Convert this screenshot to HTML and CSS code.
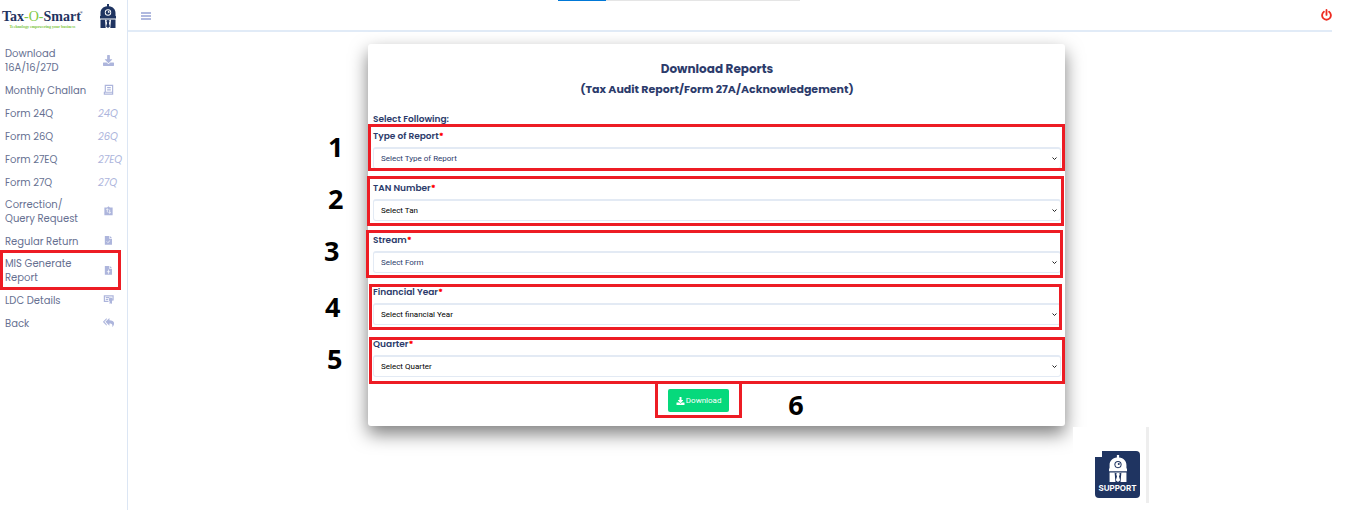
FILE: index.html
```html
<!DOCTYPE html>
<html lang="en">
<head>
<meta charset="utf-8">
<title>Download Reports</title>
<link rel="stylesheet" href="styles.css">
</head>
<body>
<svg class="sprite" aria-hidden="true">
  <symbol id="download" viewBox="0 0 512 512"><path fill="currentColor" d="M216 0h80c13 0 24 11 24 24v168h88c18 0 27 21 14 34L270 378c-8 7-20 7-28 0L90 226c-13-13-4-34 14-34h88V24c0-13 11-24 24-24zm296 376v112c0 13-11 24-24 24H24c-13 0-24-11-24-24V376c0-13 11-24 24-24h146l49 49c20 20 53 20 74 0l49-49h146c13 0 24 11 24 24z"/></symbol>
  <symbol id="mascot" viewBox="0 0 16 24"><path fill="currentColor" d="M7 0h2v2.300c4 .5 6.500 3 6.500 6.700v3h.5v2.500H0V12h.5V9C.5 5.300 3 2.800 7 2.300z"/><circle class="cut" cx="8" cy="8.500" r="3.200"/><circle cx="8" cy="8.500" r="2.300" fill="currentColor"/><circle class="cut" cx="8.700" cy="7.900" r=".9"/><path fill="currentColor" d="M.5 15.500h15V24H.5z"/><path class="cut" d="M5 15.500 8 17l3-1.500L10.300 24H5.700z"/><path fill="currentColor" d="m8 16 1.600 1.200-.7 1.800 1 3.400L8 24l-1.900-1.600 1-3.400-.7-1.800z"/></symbol>
</svg>
<div class="app">
  <aside class="sidebar">
    <div class="brand">
      <div class="logo">
        <div class="logo-name">Tax<span class="green">-O-</span>Smart<sup>®</sup></div>
        <div class="logo-tag">Technology empowering your business</div>
      </div>
      <svg class="brand-mascot"><use href="#mascot"/></svg>
    </div>
    <nav class="menu">
      <a class="item" href="#"><span>Download 16A/16/27D</span><svg class="icon"><use href="#download"/></svg></a>
      <a class="item" href="#"><span>Monthly Challan</span><svg class="icon" viewBox="0 0 12 12"><path fill="none" stroke="currentColor" stroke-width="1.300" d="M2.500 9V1.500h8V9M1.500 9v2h9V9zM4.500 4h4M4.500 6.500h4"/></svg></a>
      <a class="item" href="#"><span>Form 24Q</span><em>24Q</em></a>
      <a class="item" href="#"><span>Form 26Q</span><em>26Q</em></a>
      <a class="item" href="#"><span>Form 27EQ</span><em>27EQ</em></a>
      <a class="item" href="#"><span>Form 27Q</span><em>27Q</em></a>
      <a class="item" href="#"><span>Correction/<br>Query Request</span><svg class="icon" viewBox="0 0 12 12"><path fill="currentColor" d="M1.500 1.500h3L6 .3l1.500 1.200h3V10h-9z"/><path fill="none" stroke="#fff" stroke-width=".8" d="M4.700 7V3M3.600 4.200 4.700 3l1.100 1.200M7.300 4v4M6.200 6.800 7.300 8l1.100-1.200"/></svg></a>
      <a class="item" href="#"><span>Regular Return</span><svg class="icon" viewBox="0 0 12 12"><path fill="currentColor" d="M2 1h4.800v3h3v6.500H2zM7.500 1l2.300 2.300H7.500z"/><path fill="none" stroke="#fff" stroke-width=".8" d="m4 7 1.300 1.300L7.800 6"/></svg></a>
      <a class="item marked" href="#"><span>MIS Generate Report</span><svg class="icon" viewBox="0 0 12 12"><path fill="currentColor" d="M2 1h4.800v3h3v6.500H2zM7.500 1l2.300 2.300H7.500z"/><path fill="none" stroke="#fff" stroke-width=".8" d="M6 5v4.500M4.200 7.300h3.600"/></svg></a>
      <a class="item" href="#"><span>LDC Details</span><svg class="icon" viewBox="0 0 12 12"><path fill="none" stroke="currentColor" stroke-width="1.300" d="M6 8H1.500V2H11v5M3 4h4M3 6h2.500"/><circle cx="8.500" cy="6" r="2.200" fill="currentColor"/><path fill="currentColor" d="M7.200 7h2.600v4L8.500 10l-1.300 1z"/></svg></a>
      <a class="item" href="#"><span>Back</span><svg class="icon" viewBox="0 0 12 12"><path fill="currentColor" d="M7 1v2.500c3.600 0 5.400 1.700 5 4-.2 1.400-.9 2.500-2 3.300.8-2.600-.3-3.600-3-3.600V9.500L2.700 5.300zM4 1v1.800L1.500 5.300 4 7.800v1.700L-.2 5.300z"/></svg></a>
    </nav>
  </aside>
  <div class="main">
    <div class="progress"></div>
    <header class="topbar">
      <button class="bare burger" aria-label="Toggle menu"><i></i><i></i><i></i></button>
      <button class="bare power" aria-label="Log out"><svg viewBox="0 0 12 13"><path fill="none" stroke="currentColor" stroke-width="2" stroke-linecap="round" d="M6 1v5.500M3.200 3a4.800 4.800 0 1 0 5.600 0"/></svg></button>
    </header>
    <main class="content">
      <form class="card">
        <h1>Download Reports</h1>
        <h2>(Tax Audit Report/Form 27A/Acknowledgement)</h2>
        <p class="lead">Select Following:</p>
        <div class="field f1"><label for="type">Type of Report<b>*</b></label><select id="type" class="navy"><option>Select Type of Report</option></select><span class="step">1</span></div>
        <div class="field f2"><label for="tan">TAN Number<b>*</b></label><select id="tan"><option>Select Tan</option></select><span class="step">2</span></div>
        <div class="field f3"><label for="stream">Stream<b>*</b></label><select id="stream" class="navy"><option>Select Form</option></select><span class="step">3</span></div>
        <div class="field f4"><label for="year">Financial Year<b>*</b></label><select id="year"><option>Select financial Year</option></select><span class="step">4</span></div>
        <div class="field f5"><label for="quarter">Quarter<b>*</b></label><select id="quarter"><option>Select Quarter</option></select><span class="step">5</span></div>
        <div class="action"><button class="download" type="button"><svg><use href="#download"/></svg>Download</button><span class="step">6</span></div>
      </form>
    </main>
    <div class="support-panel">
      <button class="support"><svg><use href="#mascot"/></svg>SUPPORT</button>
    </div>
  </div>
</div>
</body>
</html>
```
FILE: styles.css
```css
* { box-sizing: border-box; }
body { margin: 0; background: #fff; color: #2c3b6b; font-family: Poppins, Inter, sans-serif; font-size: 10px; line-height: 14px; }
.sprite { position: absolute; width: 0; height: 0; }
.cut { fill: var(--cut, #fff); }
.app { display: grid; grid-template-columns: 128px 1fr; min-height: 100vh; }

.sidebar { border-right: 1px solid #dce6f4; }
.brand { display: flex; justify-content: space-between; align-items: center; height: 42px; padding: 4px 11px 14px 2px; }
.logo { color: #1f3461; font-family: "Liberation Serif", serif; font-weight: bold; padding-top: 5px; }
.logo-name { font-size: 14px; line-height: 16px; white-space: nowrap; }
.logo-name sup { margin-left: -1px; font-size: 4px; line-height: 1px; vertical-align: 7px; }
.green { color: #7fc843; font-weight: normal; }
.logo-tag { color: #7fc843; font-size: 4px; line-height: 4px; text-align: center; white-space: nowrap; }
.brand-mascot { flex: none; width: 16px; height: 24px; color: #1f3461; }

.menu { padding-top: 1px; }
.item { display: grid; grid-template-columns: 84px 1fr; align-items: center; gap: 9px; padding: 4px 0 4px 5px; min-height: 23px; position: relative; color: #667091; text-decoration: none; }
.item .icon { width: 11px; height: 11px; margin: 0 0 2px 5px; color: #adb5dc; }
.item em { color: #adb5dc; }
.marked::after { content: ""; position: absolute; inset: -3px 6px -1px 0; border: 3px solid #ed1c24; }

.main { position: relative; display: flex; flex-direction: column; }
.progress { position: absolute; top: 0; left: 35.1%; width: 19.7%; height: 1px; background: linear-gradient(90deg, #0078d7 20%, #e5e5e5 20%); }
.topbar { display: flex; justify-content: space-between; align-items: center; height: 32px; margin-right: 22px; padding-left: 13px; border-bottom: 2px solid #e1ebf7; }
.bare { border: 0; padding: 0; background: none; }
.burger { display: grid; gap: 1px; width: 10px; padding-top: 2px; }
.burger i { height: 2px; background: #b0b9df; }
.power { color: #ee2c22; width: 11px; height: 13px; }
.power svg { display: block; }

.content { display: grid; grid-template-columns: 240fr 697fr 289fr; padding-top: 12px; }
.card { grid-column: 2; padding: 14px 4px 14px 5px; border-radius: 3px; background: #fff; box-shadow: 0 8px 18px rgba(0, 0, 0, .5); }
h1, h2 { margin: 0; text-align: center; font-weight: 700; line-height: 21px; }
h1 { font-size: 12px; }
h2 { font-size: 11px; }
.lead { margin: 12px 0 3px; font-size: 9px; font-weight: 600; }
.field { position: relative; display: flex; flex-direction: column; gap: 4px; margin-bottom: 12px; }
.field label { font-size: 9px; font-weight: 600; }
.field b { color: #f00; }
.field select { appearance: none; width: 100%; height: 22px; padding: 0 7px; border: 1px solid #e3eaf4; border-top-width: 2px; border-radius: 3px; color: #000; font-family: Roboto, sans-serif; font-size: 8px; background: no-repeat right 3px center / 5px 3px url("data:image/svg+xml,%3Csvg xmlns='http://www.w3.org/2000/svg' viewBox='0 0 5 3'%3E%3Cpath d='M.5.5l2 2 2-2' fill='none' stroke='%23222'/%3E%3C/svg%3E") #fff; }
.field select.navy { color: #2c3b6b; }

.field::after, .action::before { content: ""; position: absolute; border: 3px solid #ed1c24; pointer-events: none; }
.f1::after { inset: -5px -4px -2px -5px; }
.f2::after { inset: -5px -3px -5px -6px; }
.f3::after { inset: -3px -2px -5px -7px; }
.f4::after { inset: -1px -1px -5px -4px; }
.f5::after { inset: 0 -4px -7px -4px; }
.step { position: absolute; left: -45px; top: 3px; color: #000; font-family: "Open Sans", sans-serif; font-size: 27px; font-weight: 700; line-height: 30px; }
.f3 .step { left: -49px; }
.f4 .step { left: -48px; top: 7px; }
.f5 .step { left: -46px; top: 7px; }
.action { position: relative; width: max-content; margin-left: 42.9%; }
.action::before { inset: -8px -13px -6px; }
.action .step { left: 120px; top: 1px; }
.download { display: flex; align-items: center; justify-content: center; gap: 1px; width: 61px; height: 23px; padding: 0; border: 0; border-radius: 2px; background: #06d97c; color: #fff; font: 8px Roboto, sans-serif; }
.download svg { width: 9px; height: 8px; }

.support-panel { align-self: flex-end; position: relative; width: 76px; height: 76px; margin: 1px 205px 0 0; padding: 24px 0 0 22px; border-right: 3px solid #eee; background: #fff; }
.support { --cut: #1f3461; display: flex; flex-direction: column; align-items: center; gap: 1px; width: 45px; height: 47px; padding: 4px 0 0; border: 0; border-radius: 4px; background: #1f3461; clip-path: polygon(7px 0, 100% 0, 100% 100%, 0 100%, 0 6px, 7px 6px); color: #fff; font: 700 8px/10px Inter, sans-serif; }
.support svg { width: 18px; height: 27px; }
```
